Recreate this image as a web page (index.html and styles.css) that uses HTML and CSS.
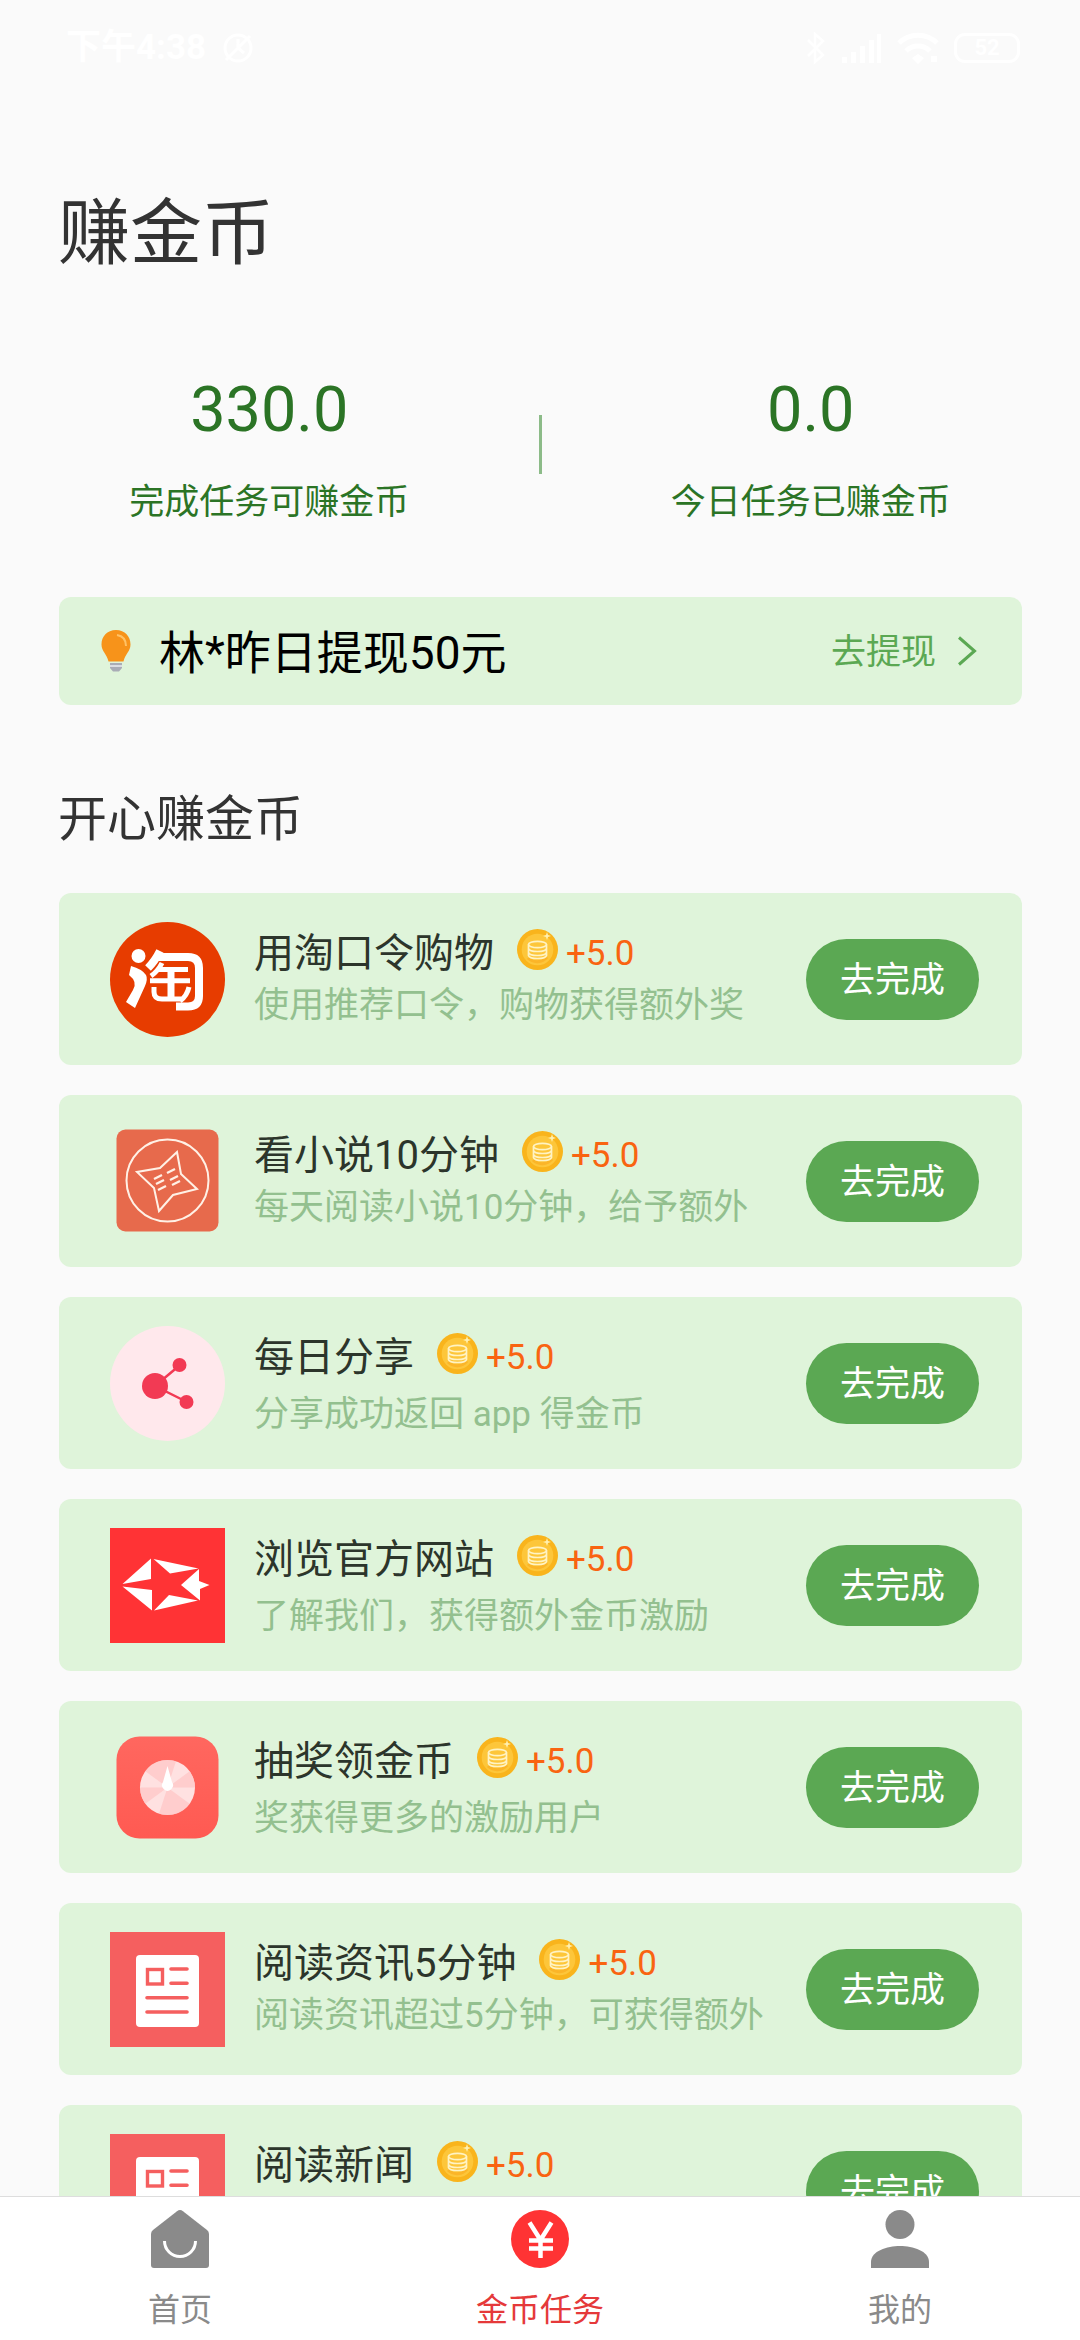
FILE: index.html
```html
<!DOCTYPE html>
<html lang="zh-CN">
<head>
<meta charset="utf-8">
<title>赚金币</title>
<link rel="stylesheet" href="styles.css">
</head>
<body>
<svg class="defs" aria-hidden="true">
  <symbol id="coin" viewBox="0 0 41 41">
    <circle cx="20.500" cy="20.500" r="20.500" fill="#f9b41c"/>
    <circle cx="20.500" cy="20.500" r="15.800" fill="#fdc63a"/>
    <path d="M11 29a13 13 0 0 0 19-1" fill="none" stroke="#fbb528" stroke-width="3"/>
    <g fill="none" stroke="#fff3c4" stroke-width="1.700">
      <ellipse cx="20.500" cy="15.500" rx="9" ry="3.200"/>
      <path d="M11.500 19.500c1 4 17 4 18 0M11.500 23.500c1 4 17 4 18 0M11.500 15.500v11c1 4 17 4 18 0v-11"/>
    </g>
    <path d="M30 3l1 3 3 1-3 1-1 3-1-3-3-1 3-1z" fill="#fff0b0"/>
  </symbol>
  <symbol id="doc" viewBox="0 0 115 115">
    <rect width="115" height="115" fill="#f55f5f"/>
    <rect x="26" y="23" width="63" height="72" rx="4" fill="#fff"/>
    <rect x="37.500" y="37.500" width="15" height="14.500" fill="none" stroke="#f55f5f" stroke-width="3.400"/>
    <path d="M61 37h16M61 51.200h16M37 65.700h40M37 80h40" stroke="#f55f5f" stroke-width="3.600" stroke-linecap="round"/>
  </symbol>
</svg>

<div class="screen">
  <header class="status">
    <span class="time">下午4:38</span>
    <svg class="mute" width="34" height="34" viewBox="0 0 34 34" fill="none" stroke="#fff" stroke-width="3"><circle cx="17" cy="17" r="13"/><path d="M5 29L29 5M17 8v9l6 5"/></svg>
    <span class="spacer"></span>
    <svg width="22" height="34" viewBox="0 0 22 34" fill="none" stroke="#fff" stroke-width="2.500"><path d="M3 9l15 15-8 7V3l8 7L3 25"/></svg>
    <svg width="40" height="34" viewBox="0 0 40 34" fill="#fff"><path d="M0 26h5v6H0zM9 21h5v11H9zM18 15h5v17h-5zM27 9h5v23h-5zM35 3h4v29h-4z"/></svg>
    <svg width="42" height="34" viewBox="0 0 42 34" fill="none" stroke="#fff" stroke-width="5"><path d="M2 12a27 27 0 0 1 38 0M9 20a17 17 0 0 1 24 0"/><path d="M21 23l6 4-6 6-6-6z" fill="#fff" stroke="none"/><path d="M34 25h6v6h-6z" fill="#fff" stroke="none"/></svg>
    <span class="battery">52</span>
  </header>

  <main class="content">
    <h1 class="page-title">赚金币</h1>
    <section class="stats">
      <div class="stat"><span class="stat-value">330.0</span><span class="stat-label">完成任务可赚金币</span></div>
      <span class="divider"></span>
      <div class="stat"><span class="stat-value">0.0</span><span class="stat-label">今日任务已赚金币</span></div>
    </section>

    <section class="banner">
      <svg width="30" height="42" viewBox="0 0 30 42"><path d="M15 0C6 0 .5 6.500.5 14.500c0 7 5.500 9.500 7 17h15c1.500-7.500 7-10 7-17C29.500 6.500 24 0 15 0z" fill="#f7931a"/><path d="M16 5c6 1 9 4.500 9 11" fill="none" stroke="#ffc266" stroke-width="2"/><path d="M9 33h12v5l-3 3.500h-6L9 38z" fill="#a9acb6"/><path d="M9 36h12" stroke="#eceef2" stroke-width="1.500"/></svg>
      <span class="banner-text">林*昨日提现50元</span>
      <a class="withdraw"><span>去提现</span>
        <svg width="20" height="30" viewBox="0 0 20 30" fill="none" stroke="#5ba853" stroke-width="3"><path d="M2 1.500L17.500 15 2 28.500"/></svg>
      </a>
    </section>

    <h2 class="section-title">开心赚金币</h2>
    <section class="tasks">
      <article class="task">
        <svg class="task-icon" viewBox="0 0 115 115"><circle cx="57.500" cy="57.500" r="57.500" fill="#e73c00"/><circle cx="28.500" cy="34" r="7" fill="#fff"/><path d="M21 44q11 3 15 9 2 4-1 11l-10 22-9-6 7-12q5-8-4-15z" fill="#fff"/><g fill="none" stroke="#fff"><path d="M50 29q-5 10-12 17M48 35h30q11 0 11 11v28q0 10.500-11 10.500H66" stroke-width="8"/><path d="M52 41q-4 8-11 13M47 47.500h31M40 58.700h40M44 65v5q0 7 8 7h21M79 65q-2 9-9 14" stroke-width="5"/><path d="M61 47v30" stroke-width="7"/></g></svg>
        <div class="task-info"><div class="task-head"><span>用淘口令购物</span><svg class="coin"><use href="#coin"/></svg><b>+5.0</b></div><p>使用推荐口令，购物获得额外奖</p></div>
        <button>去完成</button>
      </article>
      <article class="task">
        <svg class="task-icon" viewBox="0 0 115 115"><g transform="translate(0 -1)"><rect x="6.500" y="6.500" width="102" height="102" rx="9" fill="#e76a4c"/><g fill="none" stroke="#fff1e6" stroke-width="2"><circle cx="57.500" cy="57.500" r="41"/><path d="M67 29l4 22 16 15-24 6-14 16-5-23-17-16 23-4z"/><path d="M44 56l8-4M46 61l8-4M48 67l8-4M57 50l8-4M60 57l8-4M62 62l8-4" stroke-width="2.300"/></g></g></svg>
        <div class="task-info"><div class="task-head"><span>看小说10分钟</span><svg class="coin"><use href="#coin"/></svg><b>+5.0</b></div><p>每天阅读小说10分钟，给予额外</p></div>
        <button>去完成</button>
      </article>
      <article class="task short">
        <svg class="task-icon" viewBox="0 0 115 115"><circle cx="57.500" cy="57.500" r="57.500" fill="#ffe8ec"/><path d="M70 39L45 60l32 16" fill="none" stroke="#f23a54" stroke-width="2.500"/><g fill="#f23a54"><circle cx="45" cy="60" r="13"/><circle cx="69.500" cy="39" r="7"/><circle cx="76.500" cy="76" r="7"/></g></svg>
        <div class="task-info"><div class="task-head"><span>每日分享</span><svg class="coin"><use href="#coin"/></svg><b>+5.0</b></div><p>分享成功返回 app 得金币</p></div>
        <button>去完成</button>
      </article>
      <article class="task short">
        <svg class="task-icon" viewBox="0 0 115 115"><rect width="115" height="115" fill="#ff3335"/><path d="M12.500 56L41 30.500v20.500zM43.500 31l45 9.500-28.500 5zM71 57l18-16v12l10.500 4L90 61v11.500zM12.500 58.500L42 62v20.500zM44 82.500L59 67l29 5.500z" fill="#fff"/></svg>
        <div class="task-info"><div class="task-head"><span>浏览官方网站</span><svg class="coin"><use href="#coin"/></svg><b>+5.0</b></div><p>了解我们，获得额外金币激励</p></div>
        <button>去完成</button>
      </article>
      <article class="task short">
        <svg class="task-icon" viewBox="0 0 115 115"><defs><linearGradient id="wheel" x1="0" y1="0" x2="0" y2="1"><stop offset="0" stop-color="#ff675f"/><stop offset="1" stop-color="#ff5a52"/></linearGradient></defs><rect x="6.500" y="6.500" width="102" height="102" rx="23" fill="url(#wheel)"/><circle cx="57.500" cy="57.500" r="27.500" fill="#ffe1e1"/><g fill="#ffc4c4"><path d="M57.500 57.500L49 31.300q8.500-2.600 17 0zM57.500 57.500L79.700 41.200q5 7.500 5.300 16.300zM57.500 57.500L79.700 73.800q-6 8-13.700 10zM57.500 57.500L66 83.700q-8.500 2.600-17 0zM57.500 57.500L35.300 73.800q-5-7.500-5.300-16.300zM57.500 57.500L35.300 41.200q6-8 13.700-10z" opacity=".7"/></g><path d="M57.500 36l4.500 16a5.500 5.500 0 1 1-9 0z" fill="#fff"/></svg>
        <div class="task-info"><div class="task-head"><span>抽奖领金币</span><svg class="coin"><use href="#coin"/></svg><b>+5.0</b></div><p>奖获得更多的激励用户</p></div>
        <button>去完成</button>
      </article>
      <article class="task">
        <svg class="task-icon"><use href="#doc"/></svg>
        <div class="task-info"><div class="task-head"><span>阅读资讯5分钟</span><svg class="coin"><use href="#coin"/></svg><b>+5.0</b></div><p>阅读资讯超过5分钟，可获得额外</p></div>
        <button>去完成</button>
      </article>
      <article class="task">
        <svg class="task-icon"><use href="#doc"/></svg>
        <div class="task-info"><div class="task-head"><span>阅读新闻</span><svg class="coin"><use href="#coin"/></svg><b>+5.0</b></div></div>
        <button>去完成</button>
      </article>
    </section>
  </main>

  <nav class="tabs">
    <a class="tab"><svg width="58" height="58" viewBox="0 0 58 58"><path d="M26 1.200q3-2.200 6 0L56 20q2 1.700 2 4v31q0 3-3 3H3q-3 0-3-3V24q0-2.300 2-4z" fill="#8a8a8a"/><path d="M13.500 31a15.500 15.500 0 0 0 31 0" fill="none" stroke="#fff" stroke-width="3"/></svg>首页</a>
    <a class="tab active"><svg width="58" height="58" viewBox="0 0 58 58"><circle cx="29" cy="29" r="29" fill="#ff3334"/><path d="M18.500 12.500L29.500 30 40.500 12.500M29.500 29v19M18 30.500h24M18 38.500h24" fill="none" stroke="#fff" stroke-width="4.500"/></svg>金币任务</a>
    <a class="tab"><svg width="58" height="58" viewBox="0 0 58 58" fill="#8a8a8a"><circle cx="29" cy="14.500" r="14.500"/><path d="M0 58v-6c0-11 16-16 29-16s29 5 29 16v6z"/></svg>我的</a>
  </nav>
</div>
</body>
</html>
```
FILE: styles.css
```css
* { box-sizing: border-box; margin: 0; padding: 0; }
body { font-family: Roboto, "Noto Sans CJK SC", sans-serif; background: #fafafa; color: #333; }
svg { flex: none; display: block; }
.defs { display: none; }
.screen { width: 1080px; height: 2340px; display: flex; flex-direction: column; overflow: hidden; }
.status { height: 96px; flex: none; display: flex; align-items: center; gap: 15px; padding: 0 60px 0 66px; color: #fff; }
.time { font-size: 35px; font-weight: 700; line-height: 40px; }
.spacer { flex: 1; }
.battery { width: 66px; height: 30px; border: 3px solid #fff; border-radius: 11px; font-size: 22px; font-weight: 700; line-height: 24px; text-align: center; }
.content { flex: 1; min-height: 0; overflow: hidden; padding: 0 58px 0 59px; }
.page-title { font-size: 72px; font-weight: 400; line-height: 100px; margin: 88px 0 0 -1px; }
.stats { display: flex; margin: 87px -58px 0 -59px; height: 180px; color: #2b7425; }
.stat { flex: 1; display: flex; flex-direction: column; align-items: center; }
.stat-value { font-size: 63px; line-height: 78px; }
.stat-label { font-size: 35px; line-height: 52px; margin-top: 28px; }
.divider { width: 3px; height: 59px; margin-top: 44px; background: #8cbb88; }
.banner { height: 108px; margin-top: 46px; padding: 0 45px 0 42px; display: flex; align-items: center; border-radius: 12px; background: #dff4da; }
.banner-text { margin-left: 28px; flex: 1; font-size: 46px; line-height: 60px; padding-top: 3px; color: #000; }
.withdraw { display: flex; align-items: center; gap: 21px; font-size: 35px; line-height: 50px; color: #5ba853; }
.withdraw span { padding-top: 4px; }
.section-title { font-size: 49px; font-weight: 400; line-height: 70px; margin: 80px 0 0 -1px; }
.tasks { display: flex; flex-direction: column; gap: 30px; margin-top: 38px; }
.task { height: 172px; flex: none; display: flex; align-items: center; padding: 0 43px 0 51px; border-radius: 12px; background: #dff4da; }
.task-icon { width: 115px; height: 115px; }
.task-info { flex: 1; height: 172px; margin-left: 29px; padding-top: 33px; white-space: nowrap; }
.task-head { display: flex; align-items: center; font-size: 40px; line-height: 56px; color: #2c352b; }
.coin { width: 41px; height: 41px; margin: 0 8px 9px 23px; }
.task-head b { font-size: 35px; font-weight: 400; color: #f96411; }
.task-info p { font-size: 35px; line-height: 48px; color: #93c08f; }
.short p { margin-top: 5px; }
.task button { width: 173px; height: 81px; border: 0; border-radius: 41px; padding-top: 3px; background: #5ba853; color: #fff; font: inherit; font-size: 35px; line-height: 50px; }
.tabs { height: 144px; flex: none; display: flex; background: #fff; border-top: 1px solid #ddd; }
.tab { flex: 1; display: flex; flex-direction: column; align-items: center; padding-top: 13px; gap: 20px; font-size: 32px; line-height: 44px; color: #8a8a8a; }
.active { color: #e5393a; }
```
